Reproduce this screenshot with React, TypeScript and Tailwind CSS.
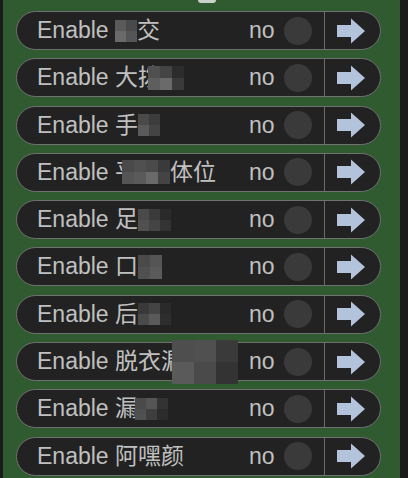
import React from "react";

type Part = { t?: string; m?: { cols: number; cells: string[]; size: number; ml?: number } };

const rows: Part[][] = [
  [{ m: { cols: 2, size: 11, cells: ["#5a5a5a", "#4a4a4a", "#6a6a6a", "#555"] } }, { t: "交" }],
  [{ t: "大拨" }, { m: { cols: 3, size: 12, ml: -13, cells: ["#505050", "#444", "#2c2c2c", "#5e5e5e", "#6a6a6a", "#3a3a3a"] } }],
  [{ t: "手" }, { m: { cols: 2, size: 11, cells: ["#4a4a4a", "#3c3c3c", "#5a5a5a", "#444"] } }],
  [{ t: "平" }, { m: { cols: 4, size: 12, ml: -16, cells: ["#4a4a4a", "#505050", "#4a4a4a", "#3a3a3a", "#555", "#5a5a5a", "#6a6a6a", "#444"] } }, { t: "体位" }],
  [{ t: "足" }, { m: { cols: 3, size: 11, cells: ["#4a4a4a", "#3a3a3a", "#2a2a2a", "#505050", "#444", "#333"] } }],
  [{ t: "口" }, { m: { cols: 2, size: 12, cells: ["#4a4a4a", "#555", "#505050", "#5a5a5a"] } }],
  [{ t: "后" }, { m: { cols: 3, size: 11, cells: ["#3a3a3a", "#444", "#2a2a2a", "#4a4a4a", "#5a5a5a", "#2e2e2e"] } }],
  [{ t: "脱衣漏" }, { m: { cols: 3, size: 22, ml: -12, cells: ["#4e4e4e", "#505050", "#3a3a3a", "#5a5a5a", "#4a4a4a", "#333"] } }],
  [{ t: "漏" }, { m: { cols: 3, size: 11, ml: -3, cells: ["#4a4a4a", "#555", "#333", "#505050", "#3e3e3e", "#2c2c2c"] } }],
  [{ t: "阿嘿颜" }],
];

function Mosaic({ cols, cells, size, ml }: { cols: number; cells: string[]; size: number; ml?: number }) {
  return (
    <span
      className="inline-grid shrink-0 align-middle"
      style={{ gridTemplateColumns: `repeat(${cols}, ${size}px)`, gridAutoRows: `${size}px`, marginLeft: ml ?? 0 }}
    >
      {cells.map((c, i) => (
        <span key={i} style={{ background: c }} />
      ))}
    </span>
  );
}

function Arrow() {
  return (
    <svg width="30" height="26" viewBox="0 0 30 26">
      <path d="M1 7 H15 V0.5 L29 13 L15 25.5 V19 H1 Z" fill="#b3c3db" />
    </svg>
  );
}

function Row({ parts }: { parts: Part[] }) {
  return (
    <div className="flex h-[39px] w-[365px] items-stretch rounded-full border-[1.5px] border-[#707070] bg-[#222222]">
      <div className="flex flex-1 items-center pl-[20px] text-[23px] leading-none text-[#c0c0c0] whitespace-nowrap">
        <span>Enable&nbsp;</span>
        {parts.map((p, i) =>
          p.t ? (
            <span key={i}>{p.t}</span>
          ) : p.m ? (
            <Mosaic key={i} cols={p.m.cols} cells={p.m.cells} size={p.m.size} ml={p.m.ml} />
          ) : null
        )}
        <span className="ml-auto">no</span>
        <span className="ml-[9px] mr-[12px] h-[28px] w-[28px] shrink-0 rounded-full bg-[#3a3a3a]" />
      </div>
      <div className="w-[1.5px] bg-[#6a6a6a]" />
      <div className="flex w-[55px] items-center pl-[11px]">
        <Arrow />
      </div>
    </div>
  );
}

export default function App() {
  return (
    <div
      className="flex h-[478px] w-[408px] overflow-hidden bg-[#1b1b1b]"
      style={{ fontFamily: '"Liberation Sans", Arial, "Noto Sans CJK SC", sans-serif' }}
    >
      <div className="ml-[3px] w-[397px] bg-[#305a2f]">
        <div className="ml-[195px] h-[3px] w-[18px] rounded-b bg-[#c9d2c6]" />
        <div className="ml-[13px] mt-[8px] flex flex-col gap-[8.3px]">
          {rows.map((r, i) => (
            <Row key={i} parts={r} />
          ))}
        </div>
      </div>
    </div>
  );
}
